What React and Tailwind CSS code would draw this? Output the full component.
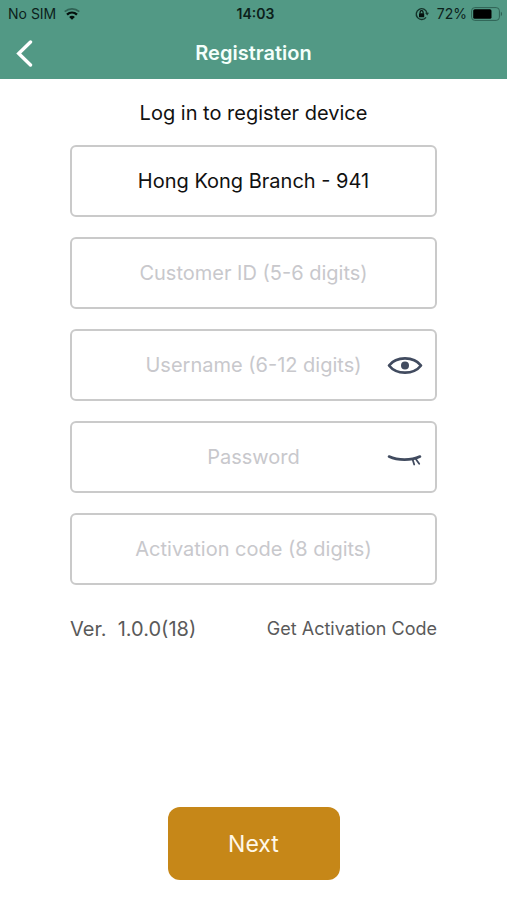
import { useState } from "react";

const FIELD =
  "block h-[72px] w-full appearance-none rounded-md border-2 border-[#cacaca] bg-white px-4 text-center text-[20px] leading-6 text-[#111111] outline-none placeholder:text-[#c8c8cc] placeholder:opacity-100";

function WifiIcon() {
  return (
    <svg className="h-3 w-4" viewBox="0 0 16 12" fill="none" aria-hidden="true">
      <path d="M0.7 3.700C5 0 11 0 15.300 3.700" stroke="#2f6254" strokeWidth="1.700" />
      <path d="M3 6.600C6 3.900 10 3.900 13 6.600" stroke="#05100d" strokeWidth="2.400" />
      <path d="M8 11.800L5.100 8.900C6.700 7.500 9.300 7.500 10.900 8.900Z" fill="#05100d" />
    </svg>
  );
}

function RotationLockIcon() {
  return (
    <svg className="h-[14px] w-[14px]" viewBox="0 0 14 14" fill="none" aria-hidden="true">
      <path d="M11.900 5.800A5.400 5.400 0 1 0 11 10.300" stroke="#14332a" strokeWidth="1.400" />
      <path d="M10 5.700H14L12.200 8.600Z" fill="#14332a" />
      <rect x="4" y="6.200" width="5.200" height="4" rx="0.5" fill="#05100d" />
      <path d="M5.100 6.400V5.200A1.500 1.500 0 0 1 8.100 5.200V6.400" stroke="#05100d" strokeWidth="1.200" />
    </svg>
  );
}

function BatteryIcon() {
  return (
    <svg className="h-[14px] w-8" viewBox="0 0 32 14" fill="none" aria-hidden="true">
      <rect x="0.6" y="0.6" width="27.800" height="12.800" rx="3.200" stroke="#2f6254" strokeWidth="1" />
      <rect x="2.200" y="2.200" width="18.300" height="9.600" rx="1.600" fill="#000000" />
      <path d="M29.800 4.800C31.400 5.400 31.400 8.600 29.800 9.200Z" fill="#2f6254" />
    </svg>
  );
}

function EyeOpen() {
  return (
    <svg className="h-5 w-9" viewBox="0 0 36 20" fill="none" aria-hidden="true">
      <path
        d="M2 10.500C5.500 6 11 3.400 18 3.400S30.500 6 34 10.500C30.500 15 25 17.600 18 17.600S5.500 15 2 10.500Z"
        stroke="#414b5f"
        strokeWidth="2.700"
        strokeLinejoin="round"
      />
      <circle cx="18" cy="10.500" r="4" fill="#414b5f" />
    </svg>
  );
}

function EyeClosed() {
  return (
    <svg className="h-5 w-9" viewBox="0 0 36 20" fill="none" stroke="#414b5f" strokeLinecap="round" aria-hidden="true">
      <path d="M2 9.500C11 13.700 24 13.700 33 9.500" strokeWidth="2.600" />
      <path d="M25.800 13L27.200 17.500M28.800 12L32.200 16.700" strokeWidth="1.800" />
    </svg>
  );
}

function MaskedField({ label, placeholder, initiallyVisible }) {
  const [visible, setVisible] = useState(initiallyVisible);
  return (
    <div className="relative">
      <input className={FIELD} type={visible ? "text" : "password"} aria-label={label} placeholder={placeholder} />
      <button
        type="button"
        className="absolute inset-y-0 right-[14px] flex items-center"
        aria-label={visible ? `Hide ${label}` : `Show ${label}`}
        onClick={() => setVisible(!visible)}
      >
        {visible ? <EyeOpen /> : <EyeClosed />}
      </button>
    </div>
  );
}

export default function App() {
  return (
    <div className="flex min-h-screen flex-col bg-white font-['Inter','Liberation_Sans',sans-serif]">
      <header className="bg-[#529985]">
        <div className="grid h-7 grid-cols-3 items-center pl-2 pr-1 text-[14px] leading-5 text-[#0c211b]">
          <div className="flex items-center gap-2">
            <span>No SIM</span>
            <WifiIcon />
          </div>
          <span className="text-center font-semibold">14:03</span>
          <div className="flex items-center justify-end">
            <RotationLockIcon />
            <span className="ml-2 mr-1">72%</span>
            <BatteryIcon />
          </div>
        </div>
        <div className="grid h-[51px] grid-cols-[48px_1fr_48px] items-center pb-0.5">
          <button type="button" aria-label="Back" className="pl-4">
            <svg className="h-7 w-[17px]" viewBox="0 0 17 28" fill="none" aria-hidden="true">
              <path d="M14.500 3L2.700 14.500L14.500 26" stroke="#ffffff" strokeWidth="3.400" strokeLinecap="round" strokeLinejoin="miter" />
            </svg>
          </button>
          <h1 className="text-center text-[20px] font-semibold leading-6 text-[#f4fffb]">Registration</h1>
        </div>
      </header>

      <form className="flex flex-1 flex-col px-[70px] pb-5" onSubmit={(e) => e.preventDefault()}>
        <h2 className="pb-5 pt-[22px] text-center text-[20px] leading-6 text-[#111111]">Log in to register device</h2>

        <div className="flex flex-col gap-5">
          <select className={`${FIELD} [text-align-last:center]`} aria-label="Branch" defaultValue="941">
            <option value="941">Hong Kong Branch - 941</option>
          </select>
          <input className={FIELD} aria-label="Customer ID" placeholder="Customer ID (5-6 digits)" />
          <MaskedField label="Username" placeholder="Username (6-12 digits)" initiallyVisible={true} />
          <MaskedField label="Password" placeholder="Password" initiallyVisible={false} />
          <input className={FIELD} aria-label="Activation code" placeholder="Activation code (8 digits)" />
        </div>

        <div className="mt-8 flex items-center justify-between text-[#5a5a5a]">
          <span className="whitespace-pre text-[20px] leading-6">Ver.  1.0.0(18)</span>
          <a href="#activation" className="text-[18px] leading-6">Get Activation Code</a>
        </div>

        <button type="submit" className="mx-auto mt-auto h-[73px] w-[172px] rounded-xl bg-[#c68718] text-[23px] leading-8 text-[#fff8e8]">
          Next
        </button>
      </form>
    </div>
  );
}
